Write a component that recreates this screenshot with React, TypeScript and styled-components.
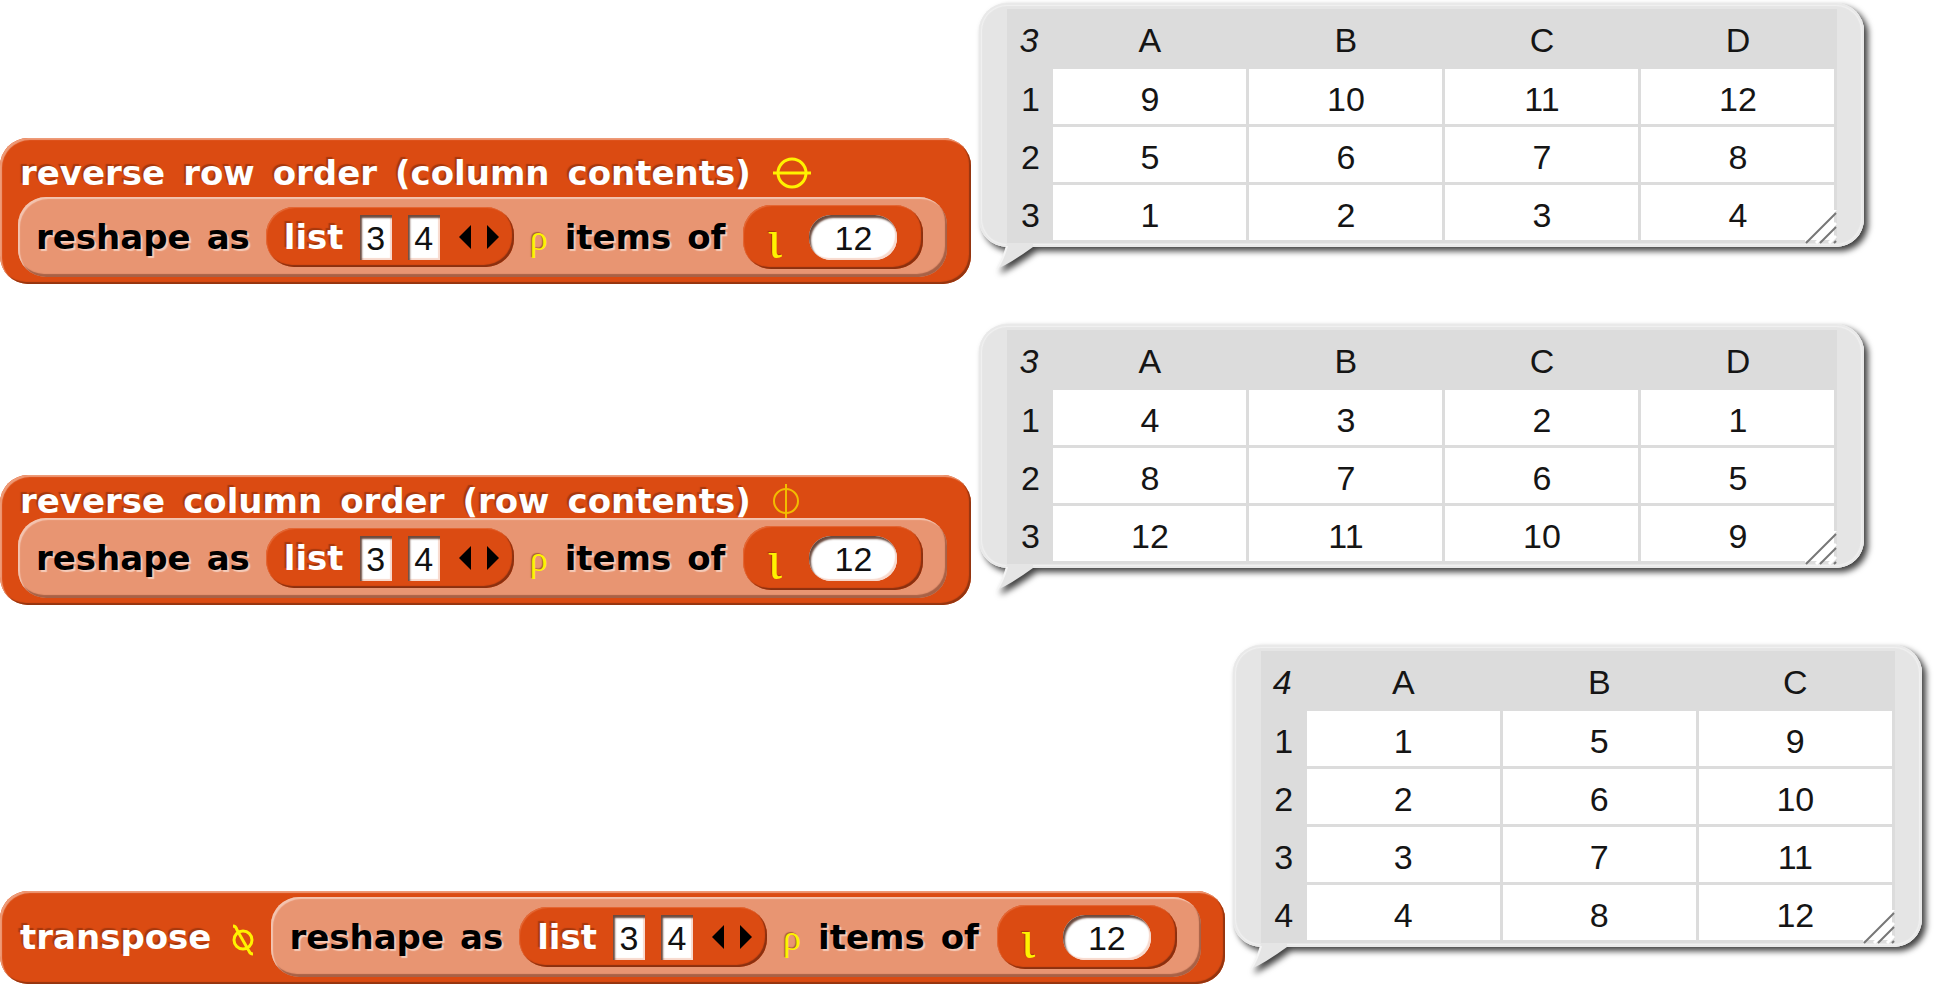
import React from "react";
import styled, { createGlobalStyle } from "styled-components";

const GlobalStyle = createGlobalStyle`
  *, *::before, *::after { box-sizing: border-box; }
  body { margin: 0; background: #fff; }
`;

const orange = "#db4b12";
const salmon = "#e89572";
const yellow = "#fff200";

const Page = styled.main`
  display: flex;
  flex-direction: column;
  gap: 40px;
  padding-top: 3px;
  font-family: "DejaVu Sans", Verdana, sans-serif;
`;

const Script = styled.section`
  display: flex;
  align-items: flex-end;
  gap: 8px;
`;

const Reporter = styled.div<{ $inline?: boolean }>`
  display: flex;
  flex-direction: ${(p) => (p.$inline ? "row" : "column")};
  align-items: ${(p) => (p.$inline ? "center" : "flex-start")};
  flex: none;
  padding: ${(p) => (p.$inline ? "6px 24px 7px 18px" : "0 24px 7px 18px")};
  border-radius: 28px;
  background: ${orange};
  box-shadow: inset 2px 2px 1px #ee9b78, inset -2px -2px 1px #943510;
`;

const Title = styled.div<{ $above: number; $below: number }>`
  display: flex;
  align-items: center;
  gap: 18px;
  height: ${(p) => 34 + p.$above + p.$below}px;
  padding: ${(p) => p.$above}px 0 ${(p) => p.$below}px 2px;
`;

const Word = styled.span<{ $dark?: boolean }>`
  font-size: 34px;
  line-height: 34px;
  font-weight: bold;
  white-space: nowrap;
  color: ${(p) => (p.$dark ? "#000" : "#fff")};
  text-shadow: ${(p) => (p.$dark ? "2px 2px 1px #f6cdbb" : "-2px -2px 1px #a5380d")};
`;

const Inner = styled.div`
  display: flex;
  align-items: center;
  gap: 16px;
  height: 80px;
  padding: 0 24px 0 18px;
  border-radius: 28px;
  background: ${salmon};
  box-shadow: inset 2px 2px 1px #f3c4b0, inset -2px -3px 1px #a86146;
`;

const Pill = styled.div<{ $tall?: boolean }>`
  display: flex;
  align-items: center;
  gap: 16px;
  height: ${(p) => (p.$tall ? 64 : 60)}px;
  margin-left: ${(p) => (p.$tall ? 2 : 0)}px;
  padding: ${(p) => (p.$tall ? "0 26px 0 24px" : "0 15px 0 18px")};
  border-radius: 28px;
  background: ${orange};
  box-shadow: inset 1px 1px 1px #e56a38, inset -2px -2px 1px #8a3010;
`;

const Slot = styled.input<{ $round?: boolean }>`
  display: block;
  width: ${(p) => (p.$round ? 88 : 32)}px;
  height: 45px;
  margin: 0;
  padding: 2px 0 0;
  border: 0;
  border-radius: ${(p) => (p.$round ? 22 : 0)}px;
  outline: 0;
  background: #fff;
  box-shadow: inset 2px 3px 2px #6b4a3e, inset -2px -2px 1px #f8d9cd;
  color: #111;
  font: 34px/43px "Liberation Sans", Arial, sans-serif;
  text-align: center;
`;

const Arrows = styled.div`
  display: flex;
  gap: 16px;
  padding-left: 3px;
`;

const ArrowButton = styled.button`
  display: block;
  width: 12px;
  height: 24px;
  padding: 0;
  border: 0;
  background: none;
  svg { display: block; }
`;

const Rho = styled.span`
  width: 19px;
  padding-top: 2px;
  color: ${yellow};
  font: 36px/34px "Liberation Serif", serif;
  text-shadow: -1px -1px 1px #a85a3a;
`;

const Iota = styled.span`
  width: 26px;
  padding-top: 4px;
  color: ${yellow};
  font: 54px/34px "Liberation Serif", serif;
  text-shadow: -1px -1px 1px #a5380d;
`;

const Glyph = styled.svg`
  display: block;
  flex: none;
  margin-left: 4px;
  overflow: visible;
  fill: none;
`;

const Bubble = styled.div`
  position: relative;
  flex: none;
  margin-bottom: 37px;
  padding: 6px 27px 4px 28px;
  border-radius: 28px;
  background: #e5e5e5;
  box-shadow: inset 0 0 0 2px #e9e9e9, inset 0 0 1px 3px #f1f1f1;
  filter: drop-shadow(4px 4px 3px rgba(0, 0, 0, 0.75));
`;

const Tail = styled.svg`
  position: absolute;
  left: 16px;
  top: calc(100% - 4px);
`;

const Grip = styled.svg`
  position: absolute;
  right: 27px;
  bottom: 3px;
`;

const Table = styled.table`
  border-collapse: separate;
  border-spacing: 0;
  table-layout: fixed;
  background: #dcdcdc;
  color: #151515;
  font: 34px/40px "Liberation Sans", Arial, sans-serif;
  text-align: center;

  th, td {
    height: 58px;
    padding: 4px 0 0;
    font-weight: normal;
  }
  thead th { height: 60px; padding: 1px 3px 0 0; }
  tbody th { padding-bottom: 3px; }
`;

const CornerHead = styled.th`
  width: 46px;
  font-style: italic;
`;

const ColumnHead = styled.th`
  width: 196px;
`;

const Cell = styled.td`
  border-right: 3px solid #dcdcdc;
  border-bottom: 3px solid #dcdcdc;
  background: #fff;
`;

function Words({ text, dark }: { text: string; dark?: boolean }) {
  return (
    <>
      {text.split(" ").map((w) => (
        <Word key={w} $dark={dark}>{w}</Word>
      ))}
    </>
  );
}

function Reshape() {
  return (
    <Inner>
      <Words text="reshape as" dark />
      <Pill>
        <Word>list</Word>
        <Slot aria-label="Rows" defaultValue="3" />
        <Slot aria-label="Columns" defaultValue="4" />
        <Arrows>
          <ArrowButton aria-label="Remove item">
            <svg width="12" height="24"><path d="M12 0V24L0 12Z" /></svg>
          </ArrowButton>
          <ArrowButton aria-label="Add item">
            <svg width="12" height="24"><path d="M0 0V24L12 12Z" /></svg>
          </ArrowButton>
        </Arrows>
      </Pill>
      <Rho>ρ</Rho>
      <Words text="items of" dark />
      <Pill $tall>
        <Iota>ι</Iota>
        <Slot $round aria-label="Count" defaultValue="12" />
      </Pill>
    </Inner>
  );
}

function Result({ columns, rows }: { columns: string[]; rows: number[][] }) {
  return (
    <Bubble>
      <Table>
        <thead>
          <tr>
            <CornerHead>{rows.length}</CornerHead>
            {columns.map((c) => <ColumnHead key={c} scope="col">{c}</ColumnHead>)}
          </tr>
        </thead>
        <tbody>
          {rows.map((row, i) => (
            <tr key={i}>
              <th scope="row">{i + 1}</th>
              {row.map((v) => <Cell key={v}>{v}</Cell>)}
            </tr>
          ))}
        </tbody>
      </Table>
      <Grip width="32" height="34" viewBox="0 0 32 34" fill="none">
        <path d="M-2 32L31 -1M11 33L31 13M24 33L31 26" stroke="#fff" strokeWidth="3" />
        <path d="M1 33L31 3M15 33L31 17M29 33L31 31" stroke="#777" strokeWidth="2" />
      </Grip>
      <Tail width="42" height="28" viewBox="0 0 42 28">
        <path d="M12 0Q8 16 2 26Q16 20 38 4V0Z" fill="#e5e5e5" />
        <path d="M12 3Q8 17 2 26" fill="none" stroke="#f4f4f4" strokeWidth="2" />
      </Tail>
    </Bubble>
  );
}

export default function App() {
  return (
    <>
      <GlobalStyle />
      <Page>
        <Script>
          <Reporter>
            <Title $above={18} $below={7}>
              <Words text="reverse row order (column contents)" />
              <Glyph width="38" height="30" stroke={yellow} strokeWidth="3">
                <circle cx="19" cy="15" r="14" />
                <path d="M0 15H38" />
              </Glyph>
            </Title>
            <Reshape />
          </Reporter>
          <Result columns={["A", "B", "C", "D"]} rows={[[9, 10, 11, 12], [5, 6, 7, 8], [1, 2, 3, 4]]} />
        </Script>
        <Script>
          <Reporter>
            <Title $above={9} $below={0}>
              <Words text="reverse column order (row contents)" />
              <Glyph width="26" height="34" stroke="#f2bd00" strokeWidth="2">
                <circle cx="13" cy="17" r="12" />
                <path d="M13 0V34" />
              </Glyph>
            </Title>
            <Reshape />
          </Reporter>
          <Result columns={["A", "B", "C", "D"]} rows={[[4, 3, 2, 1], [8, 7, 6, 5], [12, 11, 10, 9]]} />
        </Script>
        <Script>
          <Reporter $inline>
            <Title $above={0} $below={0}>
              <Words text="transpose" />
              <Glyph width="38" height="30" stroke={yellow} strokeWidth="3">
                <circle cx="10" cy="18" r="9" />
                <path d="M0 4Q3 4 4 8L16 29Q17 32 20 32" />
              </Glyph>
            </Title>
            <Reshape />
          </Reporter>
          <Result columns={["A", "B", "C"]} rows={[[1, 5, 9], [2, 6, 10], [3, 7, 11], [4, 8, 12]]} />
        </Script>
      </Page>
    </>
  );
}
